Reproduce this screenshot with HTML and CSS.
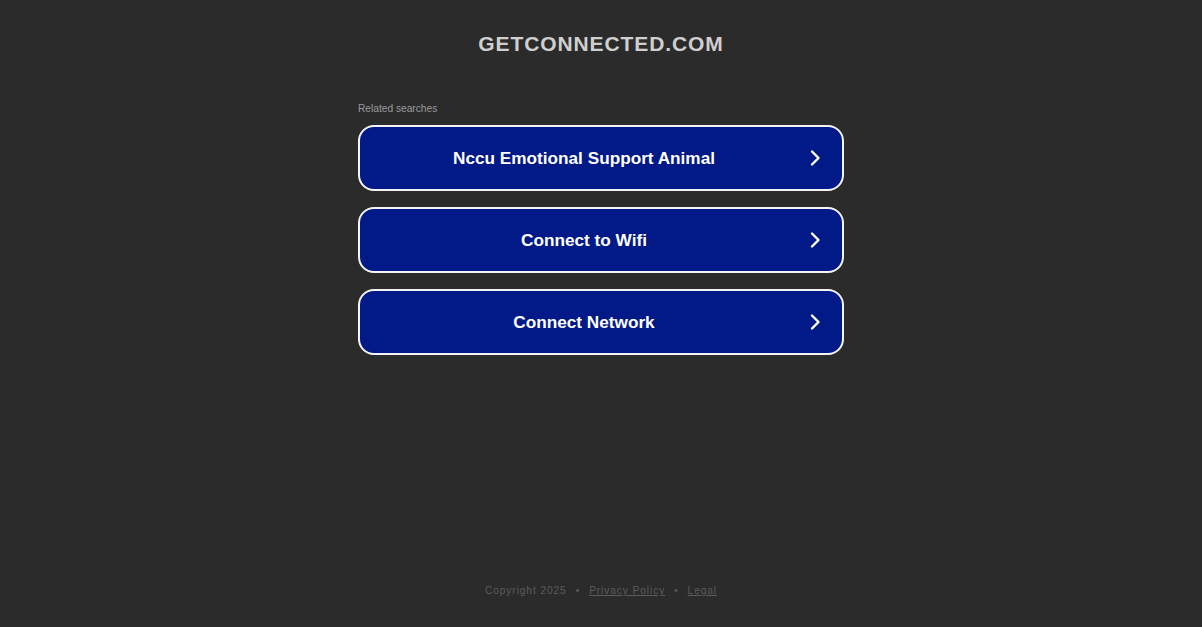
FILE: index.html
```html
<!DOCTYPE html>
<html>
<head>
<meta charset="utf-8">
<link rel="stylesheet" href="styles.css">
</head>
<body>
<div class="page">
  <header class="domain">GETCONNECTED.COM</header>
  <main class="content">
    <div class="label">Related searches</div>
    <div class="list">
      <a class="item" href="#"><span class="text">Nccu Emotional Support Animal</span><svg class="chev" viewBox="0 0 12 18" width="12" height="18"><path d="M3 2.5 L9.5 9 L3 15.5" fill="none" stroke="#fff" stroke-width="2.4" stroke-linecap="round" stroke-linejoin="round"/></svg></a>
      <a class="item" href="#"><span class="text">Connect to Wifi</span><svg class="chev" viewBox="0 0 12 18" width="12" height="18"><path d="M3 2.5 L9.5 9 L3 15.5" fill="none" stroke="#fff" stroke-width="2.4" stroke-linecap="round" stroke-linejoin="round"/></svg></a>
      <a class="item" href="#"><span class="text">Connect Network</span><svg class="chev" viewBox="0 0 12 18" width="12" height="18"><path d="M3 2.5 L9.5 9 L3 15.5" fill="none" stroke="#fff" stroke-width="2.4" stroke-linecap="round" stroke-linejoin="round"/></svg></a>
    </div>
  </main>
  <footer class="footer">
    <span>Copyright 2025</span><span class="dot">•</span><a href="#">Privacy Policy</a><span class="dot">•</span><a href="#">Legal</a>
  </footer>
</div>
</body>
</html>
```

FILE: styles.css
```css
html, body {
  margin: 0;
  padding: 0;
  background: #2b2b2b;
  height: 100%;
}
body {
  font-family: "Liberation Sans", Arial, sans-serif;
}
.page {
  display: flex;
  flex-direction: column;
  align-items: center;
  height: 627px;
}
.domain {
  margin-top: 31px;
  font-size: 21px;
  font-weight: bold;
  letter-spacing: 0.9px;
  color: #cfcfcf;
  line-height: 25px;
}
.content {
  width: 486px;
  margin-top: 46px;
}
.label {
  font-size: 10.2px;
  color: #9a9a9a;
  line-height: 13px;
  margin-bottom: 10px;
}
.list {
  display: flex;
  flex-direction: column;
  gap: 16px;
}
.item {
  display: flex;
  align-items: center;
  height: 62px;
  border: 2px solid #f4f4f4;
  border-radius: 16px;
  background: #021a87;
  text-decoration: none;
  color: #fff;
  position: relative;
}
.text {
  flex: 1;
  text-align: center;
  font-size: 17.2px;
  font-weight: bold;
  padding-left: 12px;
  padding-right: 46px;
}
.chev {
  position: absolute;
  right: 21px;
  top: 22px;
}
.footer {
  margin-top: auto;
  margin-bottom: 30px;
  font-size: 10.2px;
  letter-spacing: 0.9px;
  color: #5c5c5c;
  line-height: 13px;
}
.footer a {
  color: #5c5c5c;
}
.dot {
  margin: 0 9px;
}
```
